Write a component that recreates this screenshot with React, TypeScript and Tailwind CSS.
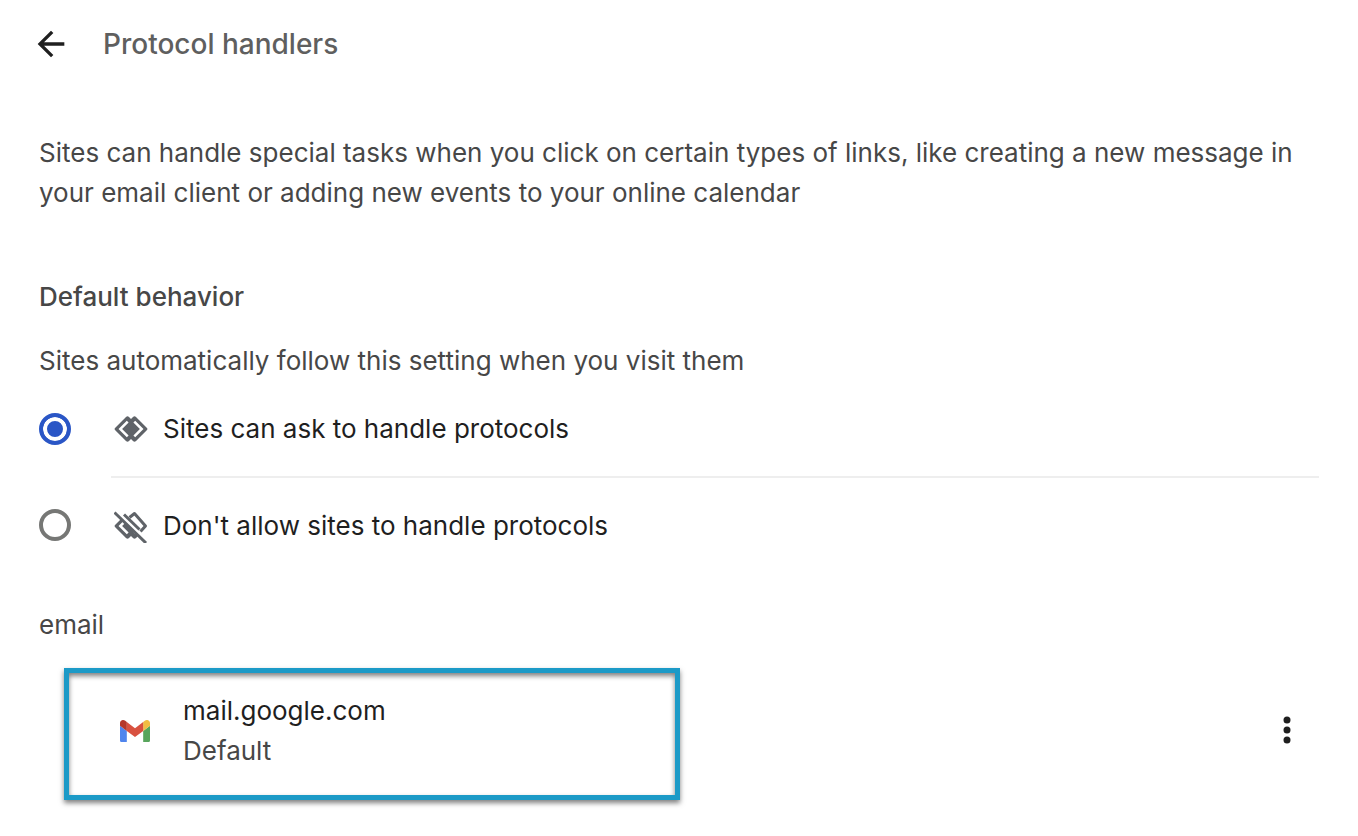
import { useState } from 'react';

type Behavior = 'ask' | 'block';

function BackArrowIcon() {
  return (
    <svg viewBox="0 0 24 24" className="size-10" fill="currentColor" aria-hidden="true">
      <path d="M20 11H7.83l5.59-5.59L12 4l-8 8 8 8 1.41-1.41L7.83 13H20v-2z" />
    </svg>
  );
}

function ProtocolIcon({ off = false }: { off?: boolean }) {
  return (
    <svg viewBox="0 0 34 34" className="size-[34px] shrink-0" aria-hidden="true">
      <path
        fill="#5f6368"
        fillRule="evenodd"
        d="M1 16 12 5Q13.5 3.6 15 5L17 7 19 5Q20.5 3.6 22 5L33 16Q34 17 33 18L22 29Q20.5 30.4 19 29L17 27 15 29Q13.5 30.4 12 29L1 18Q0 17 1 16ZM4.5 17 12.8 25.3 14.6 23.5 8.1 17 14.6 10.500 12.800 8.700ZM29.500 17 21.200 8.700 19.400 10.500 25.900 17 19.400 23.500 21.200 25.300Z"
      />
      {off && (
        <g fill="none" stroke="#5f6368" strokeWidth="3">
          <path d="M-3 0 40 43V-6H-3Z" fill="#fff" stroke="none" />
          <path d="M10 5.500 25.500 20.500" />
          <path d="M15.500 8.500 20.500 4.500 31.500 17 26.500 22.500" strokeLinejoin="round" />
          <path d="M.5 3.500 32 34" />
        </g>
      )}
    </svg>
  );
}

function GmailIcon() {
  return (
    <svg viewBox="52 42 88 66" className="w-[30px] shrink-0" aria-hidden="true">
      <path fill="#5085ed" d="M58 108h14V74L52 59v43c0 3.320 2.690 6 6 6" />
      <path fill="#58a55c" d="M120 108h14c3.320 0 6-2.690 6-6V59l-20 15" />
      <path fill="#f1bd42" d="M120 48v26l20-15v-8c0-7.420-8.470-11.650-14.400-7.200" />
      <path fill="#d85140" d="M72 74V48l24 18 24-18v26L96 92" />
      <path fill="#b5382b" d="M52 51v8l20 15V48l-5.600-4.200c-5.940-4.450-14.400-.22-14.400 7.200" />
    </svg>
  );
}

const options: { value: Behavior; label: string }[] = [
  { value: 'ask', label: 'Sites can ask to handle protocols' },
  { value: 'block', label: "Don't allow sites to handle protocols" },
];

export default function App() {
  const [behavior, setBehavior] = useState<Behavior>('ask');

  return (
    <main className="min-h-screen bg-white px-[39px] font-['Inter',sans-serif] text-[26px] leading-10 text-[#474747]">
      <header className="flex items-center pt-6">
        <button type="button" aria-label="Back" className="-ml-2 text-[#1f1f1f]">
          <BackArrowIcon />
        </button>
        <h1 className="ml-8 text-[28px] font-medium text-[#5f5f5f]">Protocol handlers</h1>
      </header>

      <p className="mt-[69px]">
        Sites can handle special tasks when you click on certain types of links, like creating a new message in
        your email client or adding new events to your online calendar
      </p>

      <section>
        <h2 className="mt-16 font-medium">Default behavior</h2>
        <p id="behavior-hint" className="mt-6">
          Sites automatically follow this setting when you visit them
        </p>
        <div role="radiogroup" aria-labelledby="behavior-hint">
          {options.map((option, index) => (
            <label key={option.value} className="flex items-center gap-10 text-[#1f1f1f]">
              <input
                type="radio"
                name="behavior"
                value={option.value}
                checked={behavior === option.value}
                onChange={() => setBehavior(option.value)}
                className="size-8 shrink-0 appearance-none rounded-full border-4 border-[#767775] bg-white checked:border-[#2a56c6] checked:bg-[#2a56c6] checked:shadow-[inset_0_0_0_4px_white]"
              />
              <span
                className={`flex flex-1 items-center gap-[15px] pl-[3px] ${index > 0 ? 'h-[98px] border-t-2 border-[#eeeeee]' : 'h-[95px]'}`}
              >
                <ProtocolIcon off={option.value === 'block'} />
                {option.label}
              </span>
            </label>
          ))}
        </div>
      </section>

      <section>
        <h2 className="mt-[31px]">email</h2>
        <div className="mt-[23px] flex items-center justify-between pr-6 pl-[25px]">
          <div className="flex w-[616px] items-center gap-[33px] border-[5px] border-[#1c9ac7] px-[51px] pt-[18px] pb-6 shadow-[0_3px_5px_rgba(0,0,0,0.5),inset_0_3px_5px_rgba(0,0,0,0.5)]">
            <GmailIcon />
            <div>
              <div className="text-[#1f1f1f]">mail.google.com</div>
              <div>Default</div>
            </div>
          </div>
          <button type="button" aria-label="More actions" className="pb-2 text-[#1f1f1f]">
            <svg viewBox="0 0 16 32" className="h-8 w-4" fill="currentColor" aria-hidden="true">
              <circle cx="8" cy="6" r="3.500" />
              <circle cx="8" cy="16" r="3.500" />
              <circle cx="8" cy="26" r="3.500" />
            </svg>
          </button>
        </div>
      </section>
    </main>
  );
}
